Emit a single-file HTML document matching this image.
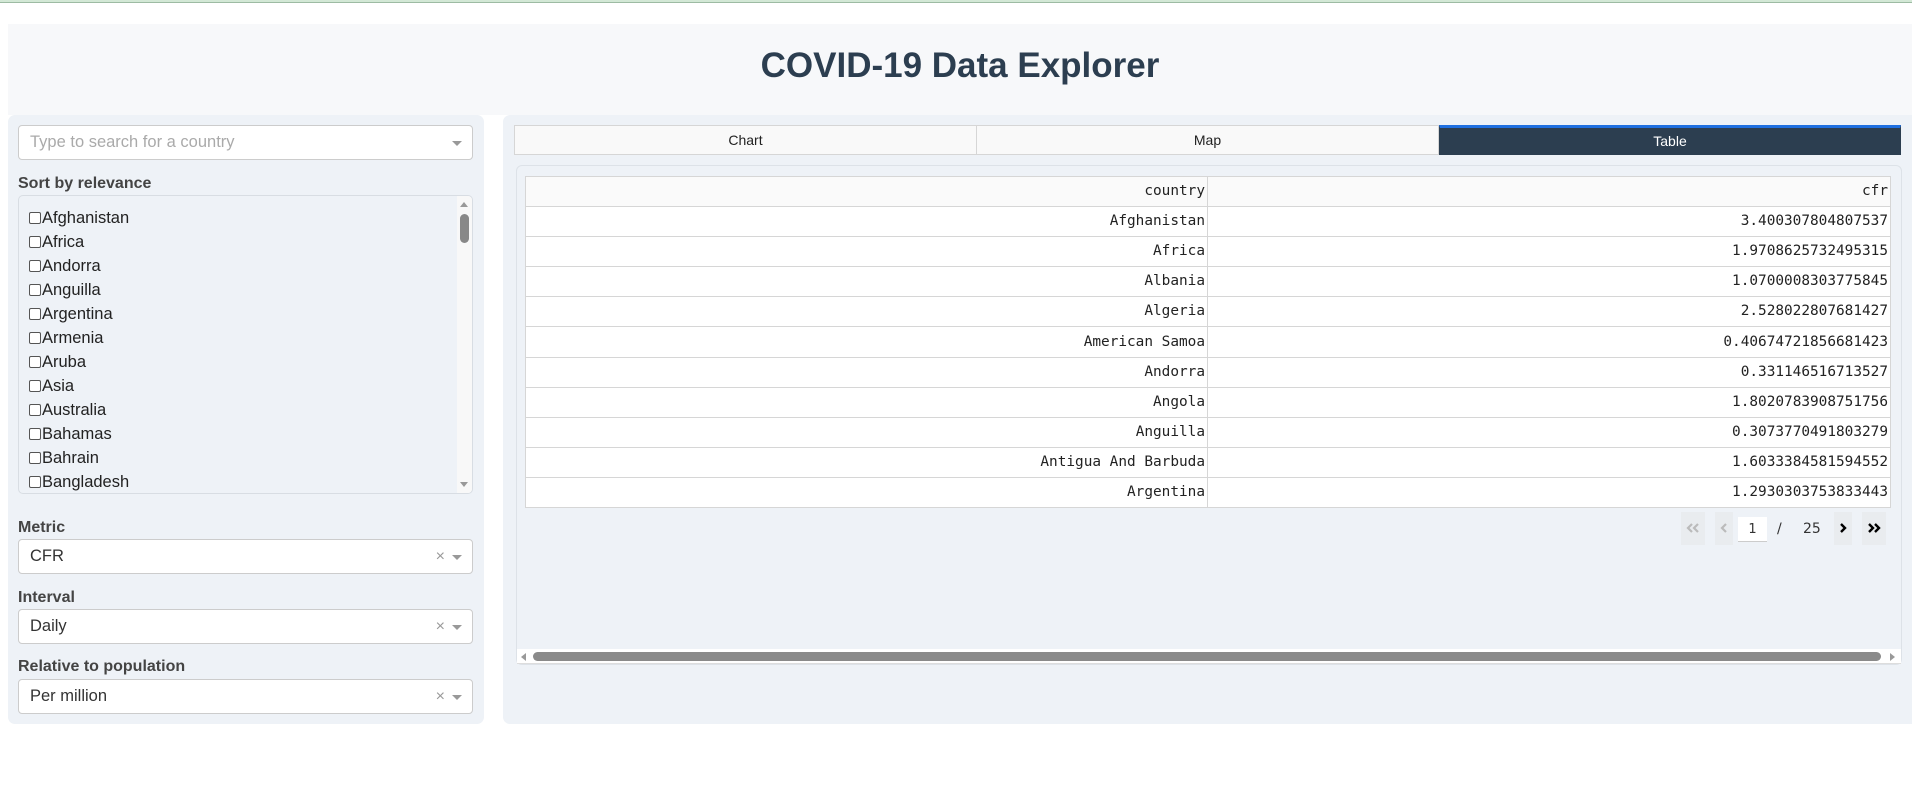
<!DOCTYPE html>
<html><head><meta charset="utf-8"><style>
*{box-sizing:border-box;margin:0;padding:0}
body{width:1912px;height:803px;background:#fff;font-family:"Liberation Sans",Arial,sans-serif;position:relative;overflow:hidden;color:#333}
.abs{position:absolute}
.topline{left:0;top:0;width:1912px;height:3px;background:#d3e8d6;border-bottom:1px solid #9dbba3}
.header{left:8px;top:24px;width:1904px;height:91px;background:#f7f8fa;text-align:center;line-height:84px;font-weight:bold;font-size:35px;color:#2c3e50}
.lp{left:8px;top:115px;width:476px;height:609px;background:#eef2f7;border-radius:7px}
.rp{left:503px;top:115px;width:1409px;height:609px;background:#eef2f7;border-radius:7px 0 0 7px}
.sel{position:absolute;left:18px;width:455px;height:35px;background:#fff;border:1px solid #ccc;border-radius:4px;font-size:16.5px;line-height:33px;padding-left:11px;color:#333}
.sel .car{position:absolute;right:10px;top:15px;width:0;height:0;border-left:5px solid transparent;border-right:5px solid transparent;border-top:5px solid #999}
.sel .x{position:absolute;right:27px;top:0;color:#999;font-size:16px}
.lab{position:absolute;left:18px;font-weight:bold;font-size:16px;color:#444}
.list{left:18px;top:195px;width:455px;height:299px;border:1px solid #d8dde3;border-radius:5px;background:#eef2f7;overflow:hidden}
.item{position:absolute;left:10px;font-size:16.5px;color:#222;line-height:20px}
.item i{display:inline-block;width:12px;height:12px;border:1px solid #555;border-radius:2px;background:#fff;vertical-align:-1px;margin-right:1px}
.tab{position:absolute;top:125px;height:30px;background:#f9f9f9;border:1px solid #d6d6d6;text-align:center;font-size:14px;line-height:29px;color:#222}
.inner{left:516px;top:165px;width:1386px;height:500px;border:1px solid #dde2e8;border-radius:6px;background:#eef2f7}
table{position:absolute;left:525px;top:176px;width:1366px;border-collapse:collapse;background:#fff;font-family:"DejaVu Sans Mono","Liberation Mono",monospace;font-size:14.4px;color:#222}
td,th{border:1px solid #d6d6d6;height:30.1px;line-height:27px;text-align:right;padding:0 2px 0 0;font-weight:normal}
th{background:#fafafa}
.pg{font-size:14px;color:#333}
</style></head><body>
<div class="abs topline"></div>
<div class="abs header">COVID-19 Data Explorer</div>
<div class="abs lp"></div>
<div class="sel" style="top:125px;color:#aaa">Type to search for a country<span class="car"></span></div>
<div class="lab" style="top:175px">Sort by relevance</div>
<div class="abs list">
<div class="item" style="top:12px"><i></i>Afghanistan</div>
<div class="item" style="top:36px"><i></i>Africa</div>
<div class="item" style="top:60px"><i></i>Andorra</div>
<div class="item" style="top:84px"><i></i>Anguilla</div>
<div class="item" style="top:108px"><i></i>Argentina</div>
<div class="item" style="top:132px"><i></i>Armenia</div>
<div class="item" style="top:156px"><i></i>Aruba</div>
<div class="item" style="top:180px"><i></i>Asia</div>
<div class="item" style="top:204px"><i></i>Australia</div>
<div class="item" style="top:228px"><i></i>Bahamas</div>
<div class="item" style="top:252px"><i></i>Bahrain</div>
<div class="item" style="top:276px"><i></i>Bangladesh</div>
<div class="abs" style="right:0;top:0;width:15px;height:299px;background:#f8f8f8"></div>
<div class="abs" style="right:4px;top:6px;border-left:4px solid transparent;border-right:4px solid transparent;border-bottom:5px solid #999"></div>
<div class="abs" style="right:3px;top:18px;width:9px;height:29px;background:#888;border-radius:5px"></div>
<div class="abs" style="right:4px;bottom:6px;border-left:4px solid transparent;border-right:4px solid transparent;border-top:5px solid #999"></div>
</div>
<div class="lab" style="top:519px">Metric</div>
<div class="sel" style="top:539px">CFR<span class="x">×</span><span class="car"></span></div>
<div class="lab" style="top:589px">Interval</div>
<div class="sel" style="top:609px">Daily<span class="x">×</span><span class="car"></span></div>
<div class="lab" style="top:658px">Relative to population</div>
<div class="sel" style="top:679px">Per million<span class="x">×</span><span class="car"></span></div>

<div class="abs rp"></div>
<div class="tab" style="left:514px;width:463px">Chart</div>
<div class="tab" style="left:976px;width:463px">Map</div>
<div class="tab" style="left:1439px;width:462px;background:#2c3e50;color:#fff;border-color:#2c3e50;border-top:3px solid #1f6fe0;line-height:26px">Table</div>
<div class="abs inner"></div>
<table>
<tr><th style="width:682px">country</th><th>cfr</th></tr>
<tr><td>Afghanistan</td><td>3.400307804807537</td></tr>
<tr><td>Africa</td><td>1.9708625732495315</td></tr>
<tr><td>Albania</td><td>1.0700008303775845</td></tr>
<tr><td>Algeria</td><td>2.528022807681427</td></tr>
<tr><td>American Samoa</td><td>0.40674721856681423</td></tr>
<tr><td>Andorra</td><td>0.331146516713527</td></tr>
<tr><td>Angola</td><td>1.8020783908751756</td></tr>
<tr><td>Anguilla</td><td>0.3073770491803279</td></tr>
<tr><td>Antigua And Barbuda</td><td>1.6033384581594552</td></tr>
<tr><td>Argentina</td><td>1.2930303753833443</td></tr>
</table>
<div class="abs" style="left:1681px;top:512px;width:24px;height:33px;background:#e9ecef"></div>
<svg class="abs" style="left:1686px;top:523px" width="14" height="10" viewBox="0 0 14 10"><path d="M6 1L2 5L6 9M12 1L8 5L12 9" fill="none" stroke="#bbb" stroke-width="2.2"/></svg>
<div class="abs" style="left:1715px;top:512px;width:18px;height:33px;background:#e9ecef"></div>
<svg class="abs" style="left:1720px;top:523px" width="8" height="10" viewBox="0 0 8 10"><path d="M6 1L2 5L6 9" fill="none" stroke="#bbb" stroke-width="2.2"/></svg>
<div class="abs pg" style="left:1738px;top:517px;width:29px;height:25px;background:#fff;border-bottom:1px solid #ccc;text-align:center;line-height:25px;font-family:'DejaVu Sans',sans-serif;font-size:13px">1</div>
<div class="abs pg" style="left:1777px;top:521px;font-family:'DejaVu Sans',sans-serif">/</div>
<div class="abs pg" style="left:1803px;top:521px;font-family:'DejaVu Sans',sans-serif">25</div>
<div class="abs" style="left:1834px;top:512px;width:18px;height:33px;background:#e9ecef"></div>
<svg class="abs" style="left:1839px;top:523px" width="8" height="10" viewBox="0 0 8 10"><path d="M2 1L6 5L2 9" fill="none" stroke="#000" stroke-width="2.4"/></svg>
<div class="abs" style="left:1862px;top:512px;width:24px;height:33px;background:#e9ecef"></div>
<svg class="abs" style="left:1867px;top:523px" width="14" height="10" viewBox="0 0 14 10"><path d="M2 1L6 5L2 9M8 1L12 5L8 9" fill="none" stroke="#000" stroke-width="2.4"/></svg>
<div class="abs" style="left:517px;top:649px;width:1384px;height:15px;background:#fff;border-bottom:1px solid #ddd"></div>
<div class="abs" style="left:521px;top:653px;border-top:4px solid transparent;border-bottom:4px solid transparent;border-right:5px solid #999"></div>
<div class="abs" style="left:533px;top:652px;width:1348px;height:9px;background:#8a8a8a;border-radius:5px"></div>
<div class="abs" style="left:1890px;top:653px;border-top:4px solid transparent;border-bottom:4px solid transparent;border-left:5px solid #999"></div>
</body></html>
